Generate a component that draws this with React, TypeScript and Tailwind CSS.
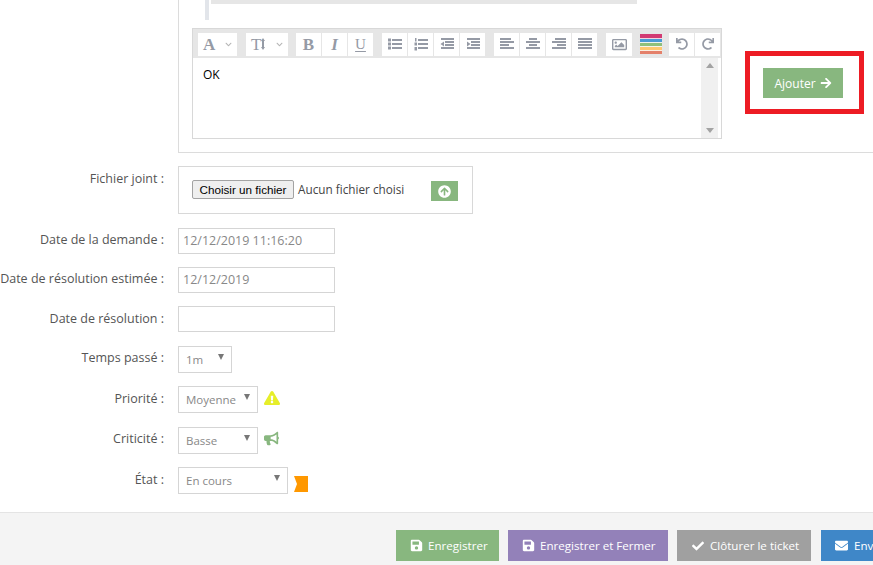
import {
  FaRegImage,
  FaUndo,
  FaRedo,
  FaArrowRight,
  FaSave,
  FaCheck,
  FaEnvelope,
  FaExclamationTriangle,
  FaBullhorn,
  FaArrowCircleUp,
  FaChevronDown,
} from "react-icons/fa";
import type { ReactNode } from "react";

const serif = { fontFamily: '"Liberation Serif", serif' };

function ToolBtn({ children, className = "w-[25px]" }: { children: ReactNode; className?: string }) {
  return <div className={`h-[23px] bg-white flex items-center justify-center text-[#959aa5] ${className}`}>{children}</div>;
}

function ToolDrop({ icon, className }: { icon: ReactNode; className: string }) {
  return (
    <div className={`h-[23px] bg-white flex items-center justify-between pl-[5px] pr-[5px] text-[#959aa5] ${className}`}>
      {icon}
      <FaChevronDown size={7} className="text-[#b5b5b5]" />
    </div>
  );
}

// bars: [x, y, width] drawn 2px tall, in a 14x13 box
function Bars({ bars, extra }: { bars: number[][]; extra?: ReactNode }) {
  return (
    <svg width="14" height="13" viewBox="0 0 14 13" fill="currentColor">
      {bars.map(([x, y, w]) => (
        <rect key={`${x}-${y}`} x={x} y={y} width={w} height="2" />
      ))}
      {extra}
    </svg>
  );
}

function Toolbar() {
  return (
    <div className="h-[29px] bg-[#e6e6e6] flex items-center pl-[5px] pt-[1px]">
      <ToolDrop icon={<span className="text-[17px] font-bold leading-none" style={serif}>A</span>} className="w-[39px]" />
      <div className="ml-[9px]">
        <ToolDrop
          icon={
            <span className="flex items-center">
              <span className="text-[17px] leading-none" style={serif}>T</span>
              <svg width="4" height="12" viewBox="0 0 4 12" fill="currentColor"><path d="M0 3l2-3 2 3H3v6h1l-2 3-2-3h1V3z" /></svg>
            </span>
          }
          className="w-[42px]"
        />
      </div>
      <div className="ml-[8px] flex gap-px">
        <ToolBtn><span className="text-[17px] font-bold leading-none" style={serif}>B</span></ToolBtn>
        <ToolBtn><span className="text-[17px] font-bold italic leading-none" style={serif}>I</span></ToolBtn>
        <ToolBtn><span className="text-[15px] leading-none underline underline-offset-2" style={serif}>U</span></ToolBtn>
      </div>
      <div className="ml-[9px] flex gap-px">
        <ToolBtn>
          <Bars bars={[[4, 1, 10], [4, 5, 10], [4, 9, 10]]} extra={<><rect x="0" y="0.5" width="3" height="3" /><rect x="0" y="4.5" width="3" height="3" /><rect x="0" y="8.5" width="3" height="3" /></>} />
        </ToolBtn>
        <ToolBtn>
          <Bars bars={[[4, 1, 10], [4, 5, 10], [4, 9, 10]]} extra={<><rect x="1" y="0" width="1.5" height="3.5" /><rect x="0.5" y="4.5" width="2.5" height="3" /><rect x="0.5" y="9" width="2.5" height="3.5" /></>} />
        </ToolBtn>
        <ToolBtn>
          <Bars bars={[[1, 0, 13], [5, 3, 9], [5, 6, 9], [1, 9, 13]]} extra={<path d="M4 3.5v5L0.5 6z" />} />
        </ToolBtn>
        <ToolBtn>
          <Bars bars={[[1, 0, 13], [5, 3, 9], [5, 6, 9], [1, 9, 13]]} extra={<path d="M1 3.5v5L4.5 6z" />} />
        </ToolBtn>
      </div>
      <div className="ml-[9px] flex gap-px">
        <ToolBtn><Bars bars={[[0, 0, 11], [0, 3, 14], [0, 6, 9], [0, 9, 14]]} /></ToolBtn>
        <ToolBtn><Bars bars={[[3, 0, 8], [0, 3, 14], [3, 6, 8], [0, 9, 14]]} /></ToolBtn>
        <ToolBtn><Bars bars={[[3, 0, 11], [0, 3, 14], [5, 6, 9], [0, 9, 14]]} /></ToolBtn>
        <ToolBtn><Bars bars={[[0, 0, 14], [0, 3, 14], [0, 6, 14], [0, 9, 14]]} /></ToolBtn>
      </div>
      <div className="ml-[9px]">
        <ToolBtn className="w-[26px]"><FaRegImage size={15} /></ToolBtn>
      </div>
      <div className="ml-[8px] w-[22px] h-[20px] flex flex-col">
        <div className="h-[4px] bg-[#d23a72]" />
        <div className="h-px bg-[#f0d5e0]" />
        <div className="h-[3px] bg-[#4a9ad6]" />
        <div className="h-px bg-[#eef3f0]" />
        <div className="h-[3px] bg-[#8fc07c]" />
        <div className="h-px bg-[#f7f5ea]" />
        <div className="h-[3px] bg-[#ffc870]" />
        <div className="h-px bg-[#fbeee0]" />
        <div className="h-[3px] bg-[#e4806a]" />
      </div>
      <div className="ml-[7px] flex gap-px">
        <ToolBtn><FaUndo size={12} /></ToolBtn>
        <ToolBtn><FaRedo size={12} /></ToolBtn>
      </div>
    </div>
  );
}

function Row({ label, children, className, labelClass = "pt-[3px]" }: { label: string; children: ReactNode; className: string; labelClass?: string }) {
  return (
    <div className={`flex ${className}`}>
      <div className={`w-[164px] shrink-0 whitespace-nowrap text-[12.5px] leading-[17px] text-[#555] flex justify-end ${labelClass}`}>{label}</div>
      <div className="ml-[14px] flex items-start">{children}</div>
    </div>
  );
}

function TextBox({ value }: { value?: string }) {
  return (
    <div className="w-[157px] h-[26px] border border-[#d5d5d5] bg-white pl-[4px] text-[12.5px] leading-[24px] text-[#888]">{value}</div>
  );
}

function Select({ value, className }: { value: string; className: string }) {
  return (
    <div className={`h-[27px] border border-[#d5d5d5] bg-white pl-[7px] pr-[7px] flex items-center justify-between text-[11.5px] text-[#888] ${className}`}>
      <span className="pt-[1px]">{value}</span>
      <svg width="6" height="6" viewBox="0 0 6 6" className="mb-[5px]"><path d="M0 0h6L3 6z" fill="#777" /></svg>
    </div>
  );
}

function FooterBtn({ icon, label, className }: { icon: ReactNode; label: string; className: string }) {
  return (
    <div className={`h-[31px] shrink-0 flex items-center text-white text-[11.6px] whitespace-nowrap ${className}`}>
      {icon}
      <span className="pt-[1px]">{label}</span>
    </div>
  );
}

export default function App() {
  return (
    <div className="w-[873px] h-[565px] overflow-hidden bg-white flex flex-col" style={{ fontFamily: '"Open Sans", sans-serif' }}>
      {/* ticket thread */}
      <div className="ml-[178px] h-[153px] border-l border-b border-[#dcdcdc] pl-[13px] shrink-0">
        <div className="flex ml-[13px] h-[20px]">
          <div className="w-[4px] h-[20px] bg-[#e2e5ea]" />
          <div className="ml-[2px] w-[426px] h-[4px] bg-[#e6e6e6]" />
        </div>
        <div className="flex mt-[8px]">
          <div className="w-[530px] h-[111px] border border-[#d8d8d8]">
            <Toolbar />
            <div className="h-[80px] flex bg-white">
              <div className="flex-1 pl-[10px] pt-[8px] text-[12px] leading-[17px] text-black">OK</div>
              <div className="w-[17px] mr-[3px] bg-[#f0f0f0] flex flex-col items-center justify-between py-[5px]">
                <svg width="8" height="5" viewBox="0 0 8 5"><path d="M0 5h8L4 0z" fill="#a3a3a3" /></svg>
                <svg width="8" height="5" viewBox="0 0 8 5"><path d="M0 0h8L4 5z" fill="#a3a3a3" /></svg>
              </div>
            </div>
          </div>
          <div className="ml-[23px] mt-[23px] w-[119px] h-[63px] border-[5px] border-[#ed1c24] flex items-center pl-[13px]">
            <div className="w-[80px] h-[30px] bg-[#88b77f] flex items-center justify-center gap-[4px] text-white text-[12px]">
              <span className="pt-[2px]">Ajouter</span>
              <FaArrowRight size={12} className="mt-[1px]" />
            </div>
          </div>
        </div>
      </div>

      {/* form */}
      <Row label="Fichier joint :" className="mt-[13px] h-[48px]" labelClass="pt-[4px]">
        <div className="w-[295px] h-[48px] border border-[#d8d8d8] flex items-center pl-[13px]">
          <div className="mb-[1px] h-[19px] w-[102px] bg-[#efefef] border border-[#a3a3a3] rounded-[2px] text-[11.7px] leading-[17px] text-center text-black" style={{ fontFamily: '"Liberation Sans", sans-serif' }}>Choisir un fichier</div>
          <span className="ml-[4px] text-[11.75px] text-[#444]">Aucun fichier choisi</span>
          <div className="ml-[27px] mt-[2px] w-[27px] h-[20px] bg-[#88b77f] flex items-center justify-center text-white"><FaArrowCircleUp size={13} /></div>
        </div>
      </Row>
      <Row label="Date de la demande :" className="mt-[14px] h-[26px]"><TextBox value="12/12/2019 11:16:20" /></Row>
      <Row label="Date de résolution estimée :" className="mt-[13px] h-[26px]"><TextBox value="12/12/2019" /></Row>
      <Row label="Date de résolution :" className="mt-[13px] h-[26px]" labelClass="pt-[4px]"><TextBox /></Row>
      <Row label="Temps passé :" className="mt-[14px] h-[26px]"><Select value="1m" className="w-[54px]" /></Row>
      <Row label="Priorité :" className="mt-[14px] h-[27px]" labelClass="pt-[4px]">
        <Select value="Moyenne" className="w-[80px]" />
        <FaExclamationTriangle size={16} className="ml-[6px] mt-[4px] text-[#e6ee2a]" />
      </Row>
      <Row label="Criticité :" className="mt-[14px] h-[27px]">
        <Select value="Basse" className="w-[80px]" />
        <FaBullhorn size={15} className="ml-[6px] mt-[4px] text-[#88b77f]" />
      </Row>
      <Row label="État :" className="mt-[13px] h-[27px]" labelClass="pt-[4px]">
        <Select value="En cours" className="w-[110px]" />
        <svg width="14" height="16" viewBox="0 0 14 16" className="ml-[6px] mt-[9px]"><path d="M0 0h14v16H0l3-8z" fill="#ff9800" /></svg>
      </Row>

      {/* footer */}
      <div className="mt-[18px] flex-1 border-t border-[#e4e4e4] bg-[#f4f4f4] pl-[396px] pt-[17px] flex gap-[9px]">
        <FooterBtn icon={<FaSave size={13} className="mr-[5px]" />} label="Enregistrer" className="w-[103px] pl-[14px] bg-[#88b77f]" />
        <FooterBtn icon={<FaSave size={13} className="mr-[5px]" />} label="Enregistrer et Fermer" className="w-[160px] pl-[14px] bg-[#9381b9]" />
        <FooterBtn icon={<FaCheck size={12} className="mr-[6px]" />} label="Clôturer le ticket" className="w-[134px] pl-[15px] bg-[#a0a0a0]" />
        <FooterBtn icon={<FaEnvelope size={13} className="mr-[6px]" />} label="Envoyer" className="ml-[1px] w-[120px] pl-[14px] bg-[#3f87c8]" />
      </div>
    </div>
  );
}
